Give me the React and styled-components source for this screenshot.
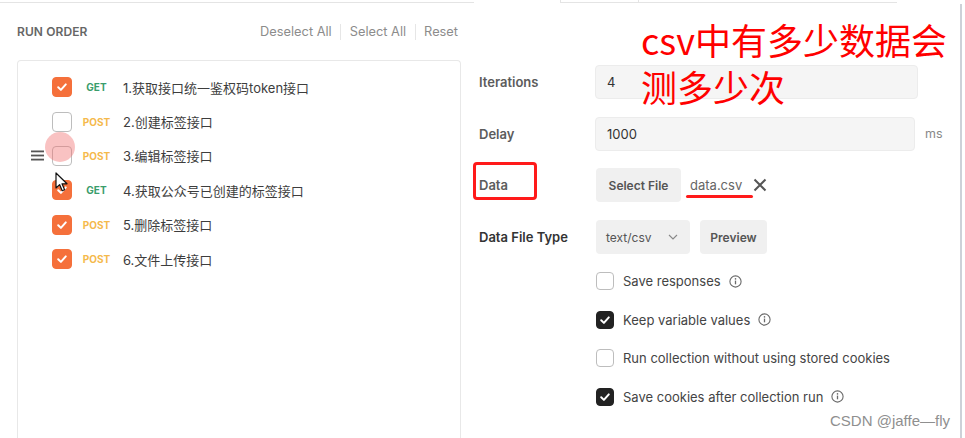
import React from "react";
import styled, { createGlobalStyle } from "styled-components";

const GlobalStyle = createGlobalStyle`
  html, body { margin: 0; padding: 0; background: #fff; }
  body { font-family: Inter, "Noto Sans", "Noto Sans CJK SC", sans-serif; }
`;

const requests = [
	{ method: "GET", name: "1.获取接口统一鉴权码token接口", checked: true },
	{ method: "POST", name: "2.创建标签接口", checked: false },
	{ method: "POST", name: "3.编辑标签接口", checked: false, dragging: true },
	{ method: "GET", name: "4.获取公众号已创建的标签接口", checked: true },
	{ method: "POST", name: "5.删除标签接口", checked: true },
	{ method: "POST", name: "6.文件上传接口", checked: true },
];

const options = [
	{ label: "Save responses", checked: false, info: true },
	{ label: "Keep variable values", checked: true, info: true },
	{ label: "Run collection without using stored cookies", checked: false },
	{ label: "Save cookies after collection run", checked: true, info: true },
];

const Check = () => (
	<svg width="12" height="12" viewBox="0 0 12 12">
		<polyline
			points="2.2 6.3 4.9 8.9 9.8 3.4"
			fill="none"
			stroke="#fff"
			strokeWidth="2"
			strokeLinecap="round"
			strokeLinejoin="round"
		/>
	</svg>
);

const InfoIcon = () => (
	<svg width="13" height="13" viewBox="0 0 13 13">
		<circle cx="6.5" cy="6.5" r="5.6" fill="none" stroke="#6a6a6a" strokeWidth="1.1" />
		<line x1="6.5" y1="5.6" x2="6.5" y2="9.3" stroke="#6a6a6a" strokeWidth="1.3" />
		<circle cx="6.5" cy="3.9" r="0.8" fill="#6a6a6a" />
	</svg>
);

export default function App() {
	return (
		<Screen>
			<GlobalStyle />
			<TabStrip>
				<TabEdge $w={474} />
				<TabGap $w={86} />
				<TabEdge $w={78} $left />
				<TabEdge $w={259} $left />
			</TabStrip>
			<Main>
				<LeftPane>
					<Header>
						<Title>RUN ORDER</Title>
						<Links>
							<Link>Deselect All</Link>
							<Divider />
							<Link>Select All</Link>
							<Divider />
							<Link>Reset</Link>
						</Links>
					</Header>
					<Card>
						{requests.map((r) => (
							<Row key={r.name}>
								<HandleSlot>
									{r.dragging && (
										<svg width="13" height="11" viewBox="0 0 13 11">
											<rect x="0" y="0.5" width="13" height="1.8" fill="#555" />
											<rect x="0" y="4.6" width="13" height="1.8" fill="#555" />
											<rect x="0" y="8.7" width="13" height="1.8" fill="#555" />
										</svg>
									)}
								</HandleSlot>
								<Box $checked={r.checked} $tone="orange" $size={20}>
									{r.checked && <Check />}
								</Box>
								<Method $get={r.method === "GET"}>{r.method}</Method>
								<Name>{r.name}</Name>
							</Row>
						))}
					</Card>
					<ClickRipple />
					<Cursor width="14" height="21" viewBox="0 0 14 21">
						<path
							d="M1 1 L1 16 L4.6 12.6 L7.2 18.8 L9.6 17.8 L7 11.8 L12 11.8 Z"
							fill="#fff"
							stroke="#111"
							strokeWidth="1.2"
							strokeLinejoin="round"
						/>
					</Cursor>
				</LeftPane>

				<RightPane>
					<Form>
						<FormRow>
							<Label>Iterations</Label>
							<Input $w={323}>4</Input>
						</FormRow>
						<FormRow>
							<Label>Delay</Label>
							<Input $w={320}>1000</Input>
							<Unit>ms</Unit>
						</FormRow>
						<FormRow>
							<Label $marked>Data</Label>
							<GrayButton $w={85}>Select File</GrayButton>
							<FileName>data.csv</FileName>
							<svg width="14" height="14" viewBox="0 0 14 14">
								<path d="M1.5 1.5 L12.5 12.5 M12.5 1.5 L1.5 12.5" stroke="#555" strokeWidth="2" />
							</svg>
						</FormRow>
						<FormRow>
							<Label $strong>Data File Type</Label>
							<Select>
								text/csv
								<svg width="10" height="6" viewBox="0 0 10 6">
									<path d="M1 1 L5 5 L9 1" fill="none" stroke="#888" strokeWidth="1.1" />
								</svg>
							</Select>
							<GrayButton $w={67} $gap={10}>Preview</GrayButton>
						</FormRow>
					</Form>
					<Options>
						{options.map((o) => (
							<Option key={o.label}>
								<Box $checked={o.checked} $tone="dark" $size={18}>
									{o.checked && <Check />}
								</Box>
								<OptionText>{o.label}</OptionText>
								{o.info && <InfoIcon />}
							</Option>
						))}
					</Options>
				</RightPane>
			</Main>
			<Annotation>
				csv中有多少数据会
				<br />
				测多少次
			</Annotation>
			<Watermark>CSDN @jaffe—fly</Watermark>
		</Screen>
	);
}

const Screen = styled.div`
	position: relative;
	width: 965px;
	height: 438px;
	overflow: hidden;
	display: flex;
	flex-direction: column;
	background: #fff;
`;

const TabStrip = styled.div`
	display: flex;
	height: 4px;
	flex-shrink: 0;
`;

const TabEdge = styled.div`
	width: ${({ $w }) => $w}px;
	height: 3px;
	border-bottom: 1px solid #e4e4e4;
	${({ $left }) => $left && "border-left: 1px solid #e4e4e4;"}
	box-sizing: border-box;
`;

const TabGap = styled.div`
	width: ${({ $w }) => $w}px;
`;

const Main = styled.div`
	flex: 1;
	display: flex;
	min-height: 0;
`;

const LeftPane = styled.div`
	position: relative;
	width: 462px;
	box-sizing: border-box;
	padding-left: 17px;
	display: flex;
	flex-direction: column;
`;

const Header = styled.div`
	height: 56px;
	display: flex;
	align-items: center;
	justify-content: space-between;
	padding-right: 4px;
	padding-bottom: 1px;
	box-sizing: border-box;
`;

const Title = styled.div`
	font-size: 12px;
	font-weight: 600;
	color: #666;
	letter-spacing: 0.1px;
`;

const Links = styled.div`
	display: flex;
	align-items: center;
`;

const Link = styled.span`
	font-size: 12.8px;
	color: #8c8c8c;
	padding: 0 8.5px;
	&:last-child {
		padding-right: 0;
	}
`;

const Divider = styled.span`
	width: 1px;
	height: 16px;
	background: #e6e6e6;
`;

const Card = styled.div`
	flex: 1;
	width: 444px;
	box-sizing: border-box;
	border: 1px solid #e8e8e8;
	border-bottom: none;
	border-radius: 4px 4px 0 0;
	padding-top: 9px;
`;

const Row = styled.div`
	height: 34.4px;
	display: flex;
	align-items: center;
`;

const HandleSlot = styled.div`
	width: 34px;
	box-sizing: border-box;
	padding-left: 13px;
	display: flex;
	align-items: center;
`;

const Box = styled.span`
	width: ${({ $size }) => $size}px;
	height: ${({ $size }) => $size}px;
	box-sizing: border-box;
	flex-shrink: 0;
	border-radius: 4px;
	display: flex;
	align-items: center;
	justify-content: center;
	background: ${({ $checked, $tone }) =>
		$checked ? ($tone === "orange" ? "#f5703b" : "#222") : "#fff"};
	border: 1.5px solid
		${({ $checked, $tone }) =>
			$checked ? ($tone === "orange" ? "#f5703b" : "#222") : "#bdbdbd"};
`;

const Method = styled.span`
	width: 37px;
	margin-left: 6px;
	text-align: center;
	font-size: 10px;
	font-weight: 700;
	color: ${({ $get }) => ($get ? "#3a9d6c" : "#f5b94c")};
`;

const Name = styled.span`
	margin-left: 8px;
	font-size: 13px;
	color: #3d3d3d;
`;

const ClickRipple = styled.div`
	position: absolute;
	left: 45px;
	top: 128px;
	width: 30px;
	height: 30px;
	border-radius: 50%;
	background: rgba(240, 110, 110, 0.42);
`;

const Cursor = styled.svg`
	position: absolute;
	left: 55px;
	top: 168px;
`;

const RightPane = styled.div`
	width: 500px;
	box-sizing: border-box;
	padding: 61px 0 0 17px;
	border-right: 2px solid #cdd1d8;
`;

const Form = styled.div`
	display: flex;
	flex-direction: column;
	gap: 17.7px;
`;

const FormRow = styled.div`
	height: 34px;
	display: flex;
	align-items: center;
`;

const Label = styled.div`
	position: relative;
	width: 116px;
	flex-shrink: 0;
	font-size: 13px;
	font-weight: 600;
	color: ${({ $strong }) => ($strong ? "#333" : "#5c5c5c")};
	${({ $marked }) =>
		$marked &&
		`
    &::after {
      content: "";
      position: absolute;
      left: -6px;
      top: -15px;
      width: 64px;
      height: 38px;
      box-sizing: border-box;
      border: 3px solid #ff1a1a;
      border-radius: 4px;
    }
  `};
`;

const Input = styled.div`
	width: ${({ $w }) => $w}px;
	height: 34px;
	box-sizing: border-box;
	background: #f5f5f5;
	border: 1px solid #ececec;
	border-radius: 4px;
	padding-left: 11px;
	display: flex;
	align-items: center;
	font-size: 13px;
	color: #333;
`;

const Unit = styled.span`
	margin-left: 10px;
	font-size: 12.5px;
	color: #888;
`;

const GrayButton = styled.div`
	width: ${({ $w }) => $w}px;
	margin-left: ${({ $gap }) => $gap || 1}px;
	height: 34px;
	box-sizing: border-box;
	border-radius: 4px;
	background: #f0f0f0;
	display: flex;
	align-items: center;
	justify-content: center;
	font-size: 12px;
	font-weight: 600;
	color: #555;
`;

const FileName = styled.span`
	position: relative;
	margin: 0 11px 0 9px;
	font-size: 13px;
	color: #666;
	&::after {
		content: "";
		position: absolute;
		left: -4px;
		right: -11px;
		bottom: -5px;
		height: 3px;
		border-radius: 2px;
		background: #ff1a1a;
	}
`;

const Select = styled.div`
	width: 94px;
	margin-left: 1px;
	height: 34px;
	box-sizing: border-box;
	border-radius: 4px;
	background: #f0f0f0;
	padding: 0 12px 0 10px;
	display: flex;
	align-items: center;
	justify-content: space-between;
	font-size: 12px;
	color: #555;
`;

const Options = styled.div`
	margin-top: 8px;
	padding-left: 117px;
	display: flex;
	flex-direction: column;
`;

const Option = styled.div`
	height: 38.5px;
	display: flex;
	align-items: center;
	gap: 9px;
`;

const OptionText = styled.span`
	font-size: 13px;
	color: #444;
	margin-right: -1px;
`;

const Annotation = styled.div`
	position: absolute;
	left: 641px;
	top: 16px;
	font-family: "Noto Sans CJK SC", "Noto Sans", sans-serif;
	font-size: 36px;
	line-height: 47px;
	color: #ff0000;
`;

const Watermark = styled.div`
	position: absolute;
	right: 15px;
	bottom: 9px;
	font-family: "Liberation Sans", Arial, sans-serif;
	font-size: 15px;
	color: #8f8f8f;
`;
